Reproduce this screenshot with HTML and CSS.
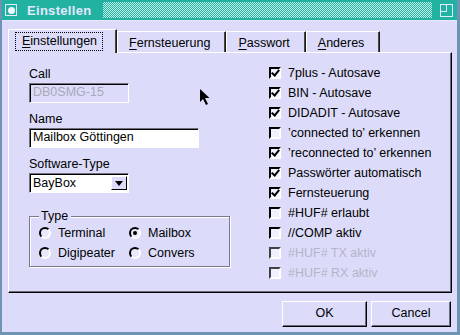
FILE: index.html
```html
<!DOCTYPE html>
<html>
<head>
  <title>Einstellen</title>
  <meta charset="UTF-8"/>
  <link rel="stylesheet" href="styles.css">
</head>
<body>

  <div class="window">
    <div class="titlebar">
      <span class="title-icon"><span class="title-dot"></span></span>
      <span class="title">Einstellen</span>
      <span class="stipple"></span>
      <svg class="max-icon" width="13" height="13" viewBox="0 0 13 13">
        <rect x="0.5" y="0.5" width="12" height="12" fill="none" stroke="#e4ecff"/>
        <polyline points="6.5,0.5 6.5,7.5 0.5,7.5" fill="none" stroke="#e4ecff"/>
      </svg>
    </div>

    <div class="client">
      <div class="tabs">
        <div class="tab active"><span class="focus"><u>E</u>instellungen</span></div>
        <div class="tab"><u>F</u>ernsteuerung</div>
        <div class="tab"><u>P</u>asswort</div>
        <div class="tab"><u>A</u>nderes</div>
      </div>

      <div class="panel">
        <div class="col-left">
          <div class="label">Call</div>
          <div class="field short disabled">DB0SMG-15</div>

          <div class="label">Name</div>
          <div class="field long">Mailbox Göttingen</div>

          <div class="label">Software-Type</div>
          <div class="field short select">
            <span class="select-text">BayBox</span>
            <span class="drop-btn"><span class="arrow"></span></span>
          </div>

          <fieldset class="group">
            <legend>Type</legend>
            <div class="radios">
              <div class="radio-row"><span class="radio"></span>Terminal</div>
              <div class="radio-row"><span class="radio on"></span>Mailbox</div>
              <div class="radio-row"><span class="radio"></span>Digipeater</div>
              <div class="radio-row"><span class="radio"></span>Convers</div>
            </div>
          </fieldset>
        </div>

        <div class="col-right">
          <div class="check-row"><span class="box checked"></span>7plus - Autosave</div>
          <div class="check-row"><span class="box checked"></span>BIN - Autosave</div>
          <div class="check-row"><span class="box checked"></span>DIDADIT - Autosave</div>
          <div class="check-row"><span class="box"></span>’connected to’ erkennen</div>
          <div class="check-row"><span class="box checked"></span>’reconnected to’ erkennen</div>
          <div class="check-row"><span class="box checked"></span>Passwörter automatisch</div>
          <div class="check-row"><span class="box checked"></span>Fernsteuerung</div>
          <div class="check-row"><span class="box"></span>#HUF# erlaubt</div>
          <div class="check-row"><span class="box"></span>//COMP aktiv</div>
          <div class="check-row disabled"><span class="box"></span>#HUF# TX aktiv</div>
          <div class="check-row disabled"><span class="box"></span>#HUF# RX aktiv</div>
        </div>
      </div>

      <div class="buttons">
        <div class="btn ok">OK</div>
        <div class="btn cancel">Cancel</div>
      </div>
    </div>

    <svg class="cursor" width="11" height="17" viewBox="0 0 11 17">
      <path d="M0 0 L0 13 L3 10 L6 16 L8 15 L5 9 L9.5 9 Z" fill="#000"/>
    </svg>
  </div>

</body>
</html>
```

FILE: styles.css
```css
body {
  margin: 0;
  background-color: #dcdcfa;
  font-family: "Liberation Sans", Arial, Helvetica, sans-serif;
  font-size: 12.5px;
  color: #000;
}

.window {
  position: relative;
  width: 460px;
  height: 335px;
  box-sizing: border-box;
  border-left: 2px solid #6f93b3;
  border-right: 3px solid #6f93b3;
  border-bottom: 3px solid #6f93b3;
  background-color: #dcdcfa;
  overflow: hidden;
}

/* title bar */
.titlebar {
  display: flex;
  align-items: center;
  height: 20px;
  padding: 0 4px 0 3px;
  background-color: #21b2a2;
  border-bottom: 1px solid #e8e8ff;
}

.title-icon {
  display: flex;
  align-items: center;
  justify-content: center;
  width: 12px;
  height: 12px;
  box-sizing: border-box;
  border: 1px solid #e4ecff;
}

.title-dot {
  width: 7px;
  height: 7px;
  border-radius: 50%;
  background-color: #f4f4ff;
}

.title {
  margin-left: 10px;
  font-size: 13px;
  font-weight: bold;
  letter-spacing: 0.3px;
  color: #e4e8ff;
}

.stipple {
  flex: 1;
  height: 16px;
  margin: 0 8px 0 12px;
  background-color: #21b2a2;
  background-image: conic-gradient(#c4eee8 25%, transparent 0 50%, #c4eee8 0 75%, transparent 0);
  background-size: 2px 2px;
}

.max-icon {
  display: block;
}

/* client area */
.client {
  padding: 8px 5px 0 6px;
}

.tabs {
  display: flex;
  align-items: flex-end;
  height: 23px;
  position: relative;
  z-index: 1;
}

.tab {
  height: 21px;
  box-sizing: border-box;
  padding: 4px 15px 0 11px;
  line-height: 14px;
  border-top: 1px solid #fff;
  border-left: 1px solid #fff;
  border-right: 1px solid #1a1a10;
  box-shadow: inset -1px 0 0 #4a4a40;
  background-color: #dcdcfa;
}

.tab.active {
  height: 24px;
  margin-bottom: -1px;
  padding: 2px 13px 0 6px;
}

.focus {
  display: inline-block;
  padding: 1px 5px 1px 6px;
  border: 1px dotted #000;
  line-height: 15px;
}

u {
  text-decoration-thickness: 1px;
  text-underline-offset: 2px;
}

.panel {
  display: grid;
  grid-template-columns: 240px 1fr;
  height: 241px;
  box-sizing: border-box;
  padding-left: 20px;
  border-top: 1px solid #fff;
  border-left: 1px solid #fff;
  border-right: 1px solid #000;
  border-bottom: 1px solid #000;
  box-shadow: inset -1px -1px 0 #6a6a80;
}

.col-left {
  padding-top: 14px;
}

.label {
  line-height: 14px;
  margin-bottom: 2px;
}

.field {
  height: 20px;
  box-sizing: border-box;
  margin-bottom: 9px;
  padding-left: 3px;
  line-height: 17px;
  border: 1px solid;
  border-color: #707080 #fff #fff #707080;
  box-shadow: inset 1px 1px 0 #000;
  background-color: #fff;
}

.field.short {
  width: 100px;
}

.field.long {
  width: 170px;
}

.field.disabled {
  background-color: #dcdcfa;
  color: #a8a8b8;
}

.select {
  display: flex;
  align-items: center;
  justify-content: space-between;
  padding-right: 1px;
}

.select-text {
  padding-top: 1px;
}

.drop-btn {
  display: flex;
  align-items: center;
  justify-content: center;
  width: 16px;
  height: 14px;
  box-sizing: border-box;
  border: 1px solid;
  border-color: #fff #000 #000 #fff;
  background-color: #dcdcfa;
}

.arrow {
  width: 0;
  height: 0;
  border-left: 4px solid transparent;
  border-right: 4px solid transparent;
  border-top: 5px solid #000;
}

.group {
  width: 201px;
  box-sizing: border-box;
  margin: 16px 0 0 0;
  padding: 0 0 3px 9px;
  border: 1px solid #7a7a8a;
  box-shadow: inset 1px 1px 0 #fff, 1px 1px 0 #fff;
}

.group legend {
  padding: 0 3px 0 2px;
  line-height: 14px;
  background-color: #dcdcfa;
}

.radios {
  display: grid;
  grid-template-columns: 90px auto;
}

.radio-row {
  display: flex;
  align-items: center;
  height: 20px;
}

.radio {
  display: flex;
  align-items: center;
  justify-content: center;
  width: 12px;
  height: 12px;
  box-sizing: border-box;
  margin-right: 7px;
  border: 2px solid;
  border-color: #000 #fff #fff #000;
  border-radius: 50%;
  background-color: #e8e8fc;
}

.radio.on::after {
  content: "";
  width: 4px;
  height: 4px;
  border-radius: 50%;
  background-color: #000;
}

.col-right {
  padding-top: 10px;
}

.check-row {
  display: flex;
  align-items: center;
  height: 20px;
}

.box {
  position: relative;
  width: 12px;
  height: 12px;
  box-sizing: border-box;
  margin-right: 7px;
  border: 2px solid;
  border-color: #000 #fff #fff #000;
  background-color: #f0f0fe;
}

.box.checked::after {
  content: "";
  position: absolute;
  left: 2px;
  top: -1px;
  width: 3px;
  height: 6px;
  border-right: 2px solid #000;
  border-bottom: 2px solid #000;
  transform: rotate(40deg);
}

.check-row.disabled {
  color: #b4b4c8;
}

.check-row.disabled .box {
  border-color: #404048 #fff #fff #404048;
}

.buttons {
  display: flex;
  justify-content: flex-end;
  gap: 4px;
  margin-top: 8px;
  padding-right: 1px;
}

.btn {
  height: 26px;
  box-sizing: border-box;
  line-height: 23px;
  text-align: center;
  border: 1px solid;
  border-color: #fff #000 #000 #fff;
  box-shadow: inset -1px -1px 0 #6a6a80;
}

.btn.ok {
  width: 85px;
}

.btn.cancel {
  width: 80px;
}

.cursor {
  position: absolute;
  left: 198px;
  top: 89px;
}
```
